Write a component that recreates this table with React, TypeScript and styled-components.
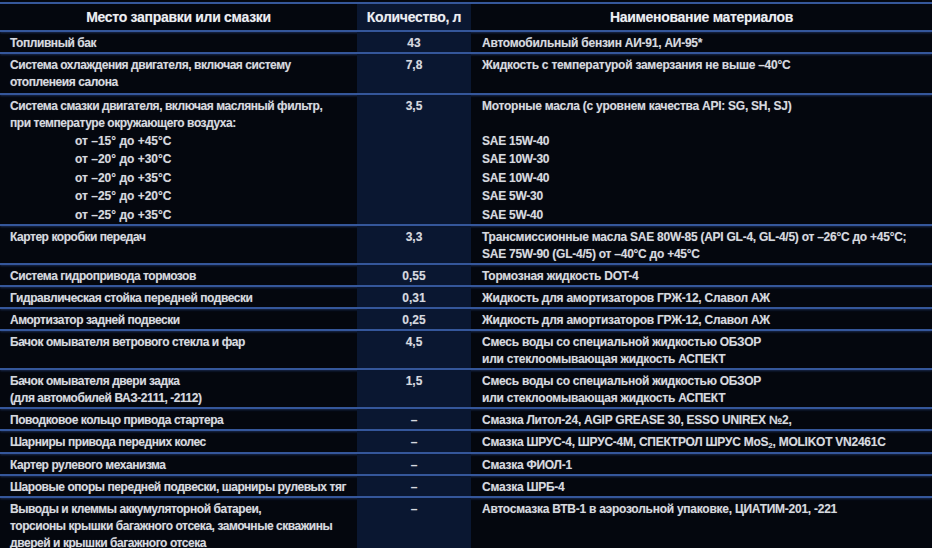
import React from "react";
import styled, { createGlobalStyle } from "styled-components";

const Global = createGlobalStyle`
  html, body { margin: 0; padding: 0; background: #04070e; }
  body { font-family: "Liberation Sans", Arial, sans-serif; }
`;

const Table = styled.div`
  width: 932px;
  height: 548px;
  overflow: hidden;
  background: #04070e;
  padding-top: 2px;
  box-sizing: border-box;
`;

const Row = styled.div<{ $header?: boolean }>`
  display: grid;
  grid-template-columns: 357px 114px 1fr;
  border-bottom: 2px solid #35579a;
  box-shadow: 0 1px 2px rgba(70, 110, 200, 0.35);
  ${(p) => (p.$header ? "border-top: 2px solid #35579a;" : "")}
`;

const Cell = styled.div<{ $kind: "place" | "qty" | "mat"; $extra?: number }>`
  box-sizing: border-box;
  padding: 3px 0 ${(p) => p.$extra ?? 0}px;
  padding-left: ${(p) => (p.$kind === "place" ? 10 : p.$kind === "mat" ? 11 : 0)}px;
  background: ${(p) => (p.$kind === "qty" ? "#0a1731" : "transparent")};
  color: #d6d9df;
  font-weight: 700;
  font-size: 12px;
  letter-spacing: ${(p) => (p.$kind === "place" ? "-0.45px" : p.$kind === "mat" ? "-0.25px" : "0")};
  line-height: 17px;
  text-align: ${(p) => (p.$kind === "qty" ? "center" : "left")};
  text-shadow: 0 0 1px rgba(220, 225, 235, 0.35);
  white-space: nowrap;
`;

const HeadCell = styled.div<{ $mid?: boolean }>`
  padding: 4px 0 3px;
  background: ${(p) => (p.$mid ? "#0a1731" : "transparent")};
  color: #eceef2;
  font-weight: 700;
  font-size: 14px;
  letter-spacing: -0.3px;
  line-height: 19px;
  text-align: center;
  text-shadow: 0 0 1px rgba(220, 225, 235, 0.35);
  white-space: nowrap;
`;

const Sub = styled.div`
  line-height: 18.4px;
`;

const Indent = styled.div`
  padding-left: 65px;
  letter-spacing: 0;
`;

const Small = styled.sub`
  font-size: 8px;
  vertical-align: baseline;
  position: relative;
  top: 2px;
`;

type R = { place: React.ReactNode; qty: string; mat: React.ReactNode; extra?: number };

const temps = ["от –15° до +45°C", "от –20° до +30°C", "от –20° до +35°C", "от –25° до +20°C", "от –25° до +35°C"];
const saes = ["SAE 15W-40", "SAE 10W-30", "SAE 10W-40", "SAE 5W-30", "SAE 5W-40"];

const rows: R[] = [
  { place: "Топливный бак", qty: "43", mat: "Автомобильный бензин АИ-91, АИ-95*" },
  {
    place: (
      <>
        Система охлаждения двигателя, включая систему
        <br />
        отопленеия салона
      </>
    ),
    qty: "7,8",
    mat: "Жидкость с температурой замерзания не выше –40°C",
    extra: 2,
  },
  {
    place: (
      <>
        Система смазки двигателя, включая масляный фильтр,
        <br />
        при температуре окружающего воздуха:
        <Sub>
          {temps.map((t) => (
            <Indent key={t}>{t}</Indent>
          ))}
        </Sub>
      </>
    ),
    qty: "3,5",
    mat: (
      <>
        Моторные масла (с уровнем качества API: SG, SH, SJ)
        <br />
        &nbsp;
        <Sub>
          {saes.map((s, i) => (
            <div key={i}>{s}</div>
          ))}
        </Sub>
      </>
    ),
  },
  {
    place: "Картер коробки передач",
    qty: "3,3",
    mat: (
      <>
        Трансмиссионные масла SAE 80W-85 (API GL-4, GL-4/5) от –26°C до +45°C;
        <br />
        SAE 75W-90 (GL-4/5) от –40°C до +45°C
      </>
    ),
  },
  { place: "Система гидропривода тормозов", qty: "0,55", mat: "Тормозная жидкость DOT-4" },
  { place: "Гидравлическая стойка передней подвески", qty: "0,31", mat: "Жидкость для амортизаторов ГРЖ-12, Славол АЖ" },
  { place: "Амортизатор задней подвески", qty: "0,25", mat: "Жидкость для амортизаторов ГРЖ-12, Славол АЖ" },
  {
    place: "Бачок омывателя ветрового стекла и фар",
    qty: "4,5",
    mat: (
      <>
        Смесь воды со специальной жидкостью ОБЗОР
        <br />
        или стеклоомывающая жидкость АСПЕКТ
      </>
    ),
  },
  {
    place: (
      <>
        Бачок омывателя двери задка
        <br />
        (для автомобилей ВАЗ-2111, -2112)
      </>
    ),
    qty: "1,5",
    mat: (
      <>
        Смесь воды со специальной жидкостью ОБЗОР
        <br />
        или стеклоомывающая жидкость АСПЕКТ
      </>
    ),
  },
  { place: "Поводковое кольцо привода стартера", qty: "–", mat: "Смазка Литол-24, AGIP GREASE 30, ESSO UNIREX №2," },
  {
    place: "Шарниры привода передних колес",
    qty: "–",
    mat: (
      <>
        Смазка ШРУС-4, ШРУС-4М, СПЕКТРОЛ ШРУС MoS<Small>2</Small>, MOLIKOT VN2461C
      </>
    ),
  },
  { place: "Картер рулевого механизма", qty: "–", mat: "Смазка ФИОЛ-1" },
  { place: "Шаровые опоры передней подвески, шарниры рулевых тяг", qty: "–", mat: "Смазка ШРБ-4" },
  {
    place: (
      <>
        Выводы и клеммы аккумуляторной батареи,
        <br />
        торсионы крышки багажного отсека, замочные скважины
        <br />
        дверей и крышки багажного отсека
      </>
    ),
    qty: "–",
    mat: "Автосмазка ВТВ-1 в аэрозольной упаковке, ЦИАТИМ-201, -221",
  },
];

export default function App() {
  return (
    <>
      <Global />
      <Table>
        <Row $header>
          <HeadCell>Место заправки или смазки</HeadCell>
          <HeadCell $mid>Количество, л</HeadCell>
          <HeadCell>Наименование материалов</HeadCell>
        </Row>
        {rows.map((r, i) => (
          <Row key={i}>
            <Cell $kind="place" $extra={r.extra}>
              {r.place}
            </Cell>
            <Cell $kind="qty" $extra={r.extra}>
              {r.qty}
            </Cell>
            <Cell $kind="mat" $extra={r.extra}>
              {r.mat}
            </Cell>
          </Row>
        ))}
      </Table>
    </>
  );
}
